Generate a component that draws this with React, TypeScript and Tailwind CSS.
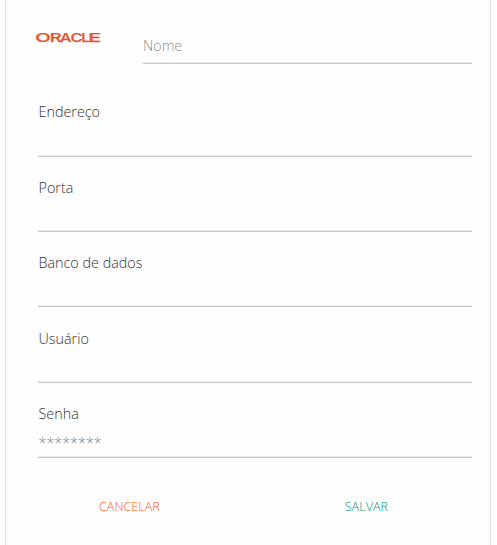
const labelFields = [
  { id: 'endereco', label: 'Endereço' },
  { id: 'porta', label: 'Porta' },
  { id: 'banco', label: 'Banco de dados' },
  { id: 'usuario', label: 'Usuário' },
  { id: 'senha', label: 'Senha', placeholder: '********' },
];

const inputClass =
  'block w-full border-b border-[#c8c8c8] shadow-[inset_0_-1px_0_#ebebeb] bg-transparent outline-none placeholder:opacity-100';

function OracleLogo() {
  return (
    <svg className="mt-[25px] h-[24px] w-[72px] shrink-0" viewBox="-2 -6 72 24" role="img" aria-label="Oracle">
      <text
        y="10.6"
        fill="#df5634"
        stroke="#df5634"
        strokeWidth="0.25"
        fontSize="12"
        fontWeight="500"
        fontFamily="Inter, sans-serif"
      >
        <tspan x="-0.8" textLength="15.5" lengthAdjust="spacingAndGlyphs">O</tspan>
        <tspan x="13.7" textLength="12" lengthAdjust="spacingAndGlyphs">R</tspan>
        <tspan x="24" textLength="11.5" lengthAdjust="spacingAndGlyphs">A</tspan>
        <tspan x="34.5" textLength="12.2" lengthAdjust="spacingAndGlyphs">C</tspan>
        <tspan x="45.2" textLength="8.8" lengthAdjust="spacingAndGlyphs">L</tspan>
        <tspan x="52.3" textLength="13" lengthAdjust="spacingAndGlyphs">E</tspan>
      </text>
      <circle cx="65.4" cy="2.2" r="0.5" fill="#f2b5a6" />
    </svg>
  );
}

export default function App() {
  return (
    <div className="h-[545px] overflow-hidden bg-white pl-[5px] font-['Open_Sans',sans-serif] font-light">
      <form className="h-full w-[486px] border-x border-[#dedede] bg-[#fefefe] pl-8 pr-[18px]">
        {/* Logo and connection name */}
        <div className="flex h-16 items-start justify-between">
          <div className="-ml-[4px] flex">
            <OracleLogo />
          </div>
          <input
            aria-label="Nome"
            placeholder="Nome"
            className={`${inputClass} mt-[30px] h-[34px] max-w-[329px] pb-[3px] text-[14.3px] placeholder:text-[#8c8c8c]`}
          />
        </div>

        {/* Connection fields */}
        <div className="pt-[17.15px]">
          {labelFields.map((field) => (
            <div key={field.id} className="flex h-[75.4px] flex-col justify-between pt-[21.25px]">
              <label htmlFor={field.id} className="pl-[0.5px] text-[14.35px] leading-5 text-[#333]">
                {field.label}
              </label>
              <input
                id={field.id}
                placeholder={field.placeholder}
                className={`${inputClass} h-[32px] pl-[0.5px] pt-[2.5px] text-[14.35px] placeholder:text-[#78838c]`}
              />
            </div>
          ))}
        </div>

        {/* Actions */}
        <div className="flex pt-[38.75px] text-[12.6px] leading-5">
          <button type="button" className="ml-[61px] text-[#ff5722]">
            CANCELAR
          </button>
          <button type="button" className="ml-[185px] text-[#009688]">
            SALVAR
          </button>
        </div>
      </form>
    </div>
  );
}
